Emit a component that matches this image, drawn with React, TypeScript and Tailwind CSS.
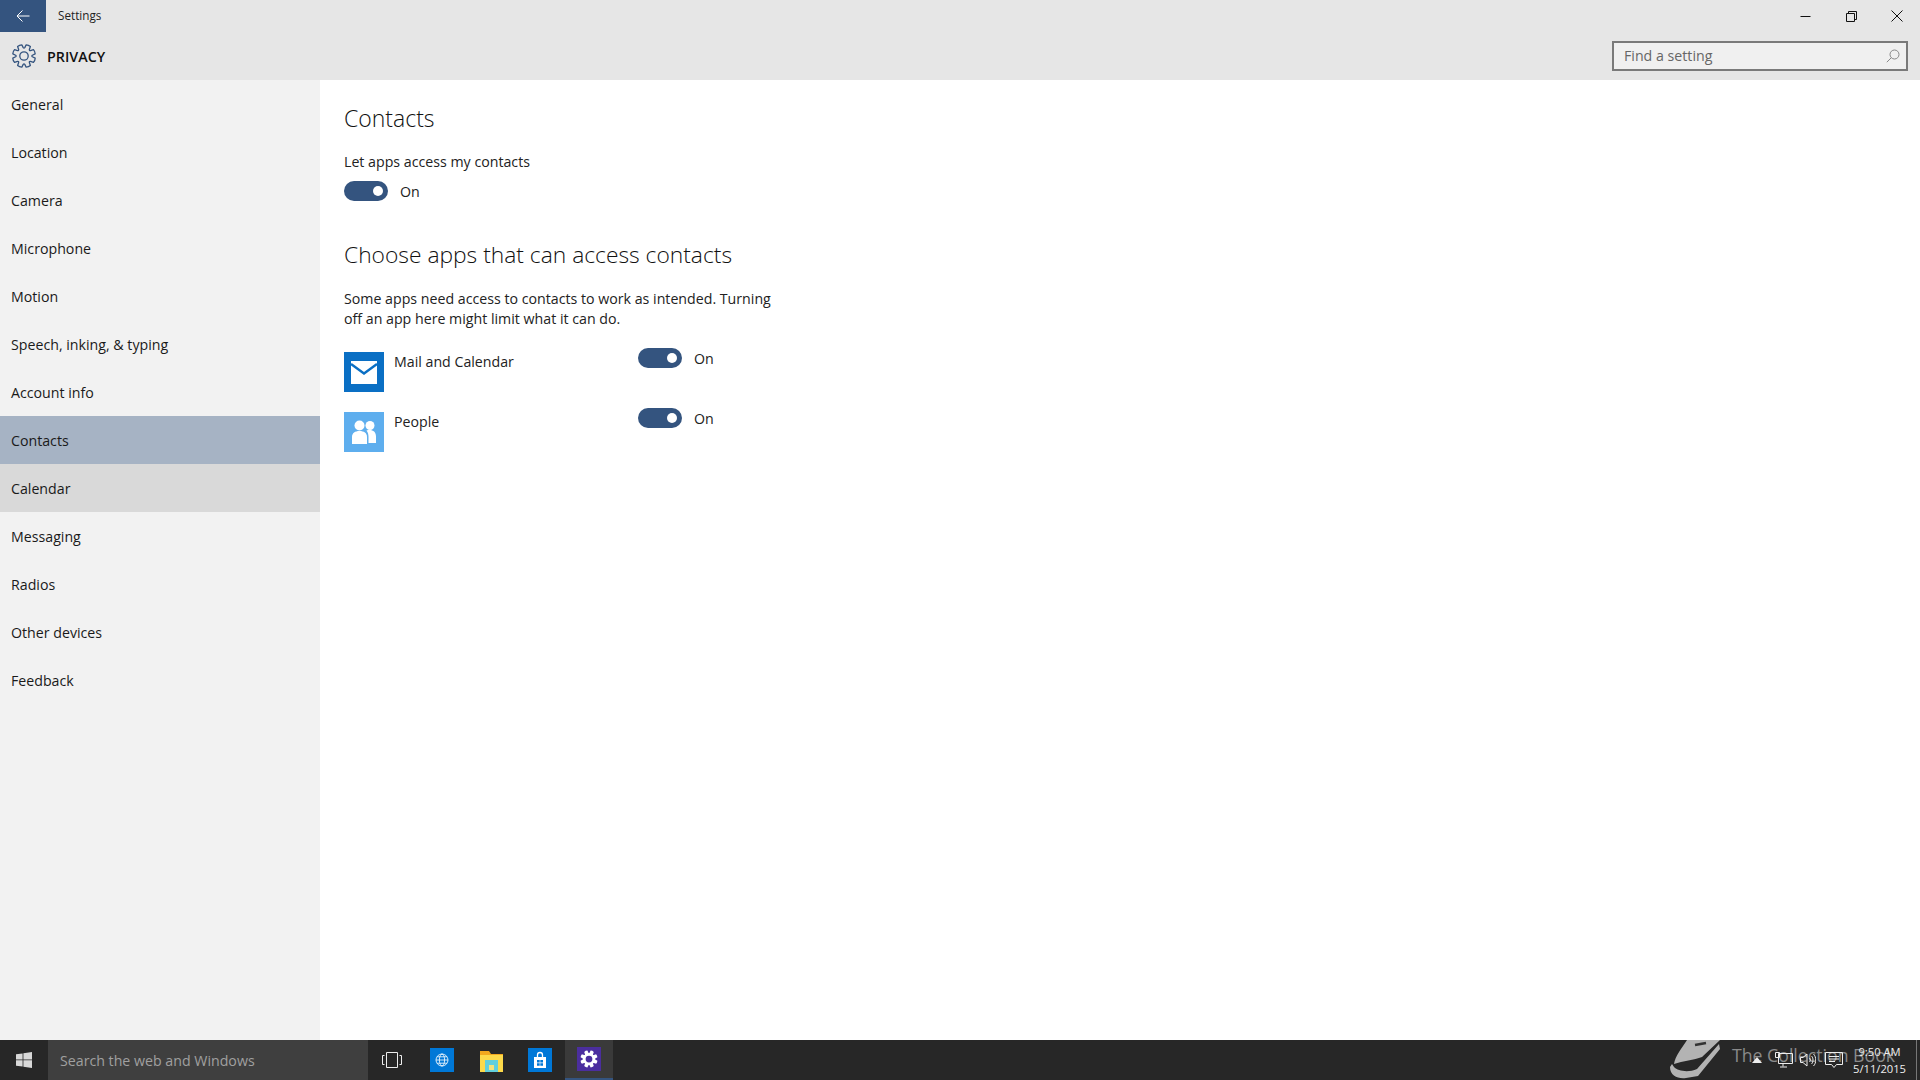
import React from "react";

const NAV = ["General","Location","Camera","Microphone","Motion","Speech, inking, & typing","Account info","Contacts","Calendar","Messaging","Radios","Other devices","Feedback"];

function gearPath(outer: number, inner: number) {
  const pts: string[] = [];
  const p = (r: number, a: number) => `${(12 + r * Math.cos(a)).toFixed(2)} ${(12 + r * Math.sin(a)).toFixed(2)}`;
  for (let i = 0; i < 8; i++) {
    const a = (i * Math.PI) / 4 + Math.PI / 8;
    pts.push(`${i === 0 ? "M" : "L"}${p(inner, a - 0.3)}`);
    pts.push(`L${p(outer, a - 0.2)}`);
    pts.push(`Q${p(outer + 0.6, a)} ${p(outer, a + 0.2)}`);
    pts.push(`L${p(inner, a + 0.3)}`);
    pts.push(`Q${p(inner - 1, a + Math.PI / 8)} ${p(inner, a + Math.PI / 4 - 0.3)}`);
  }
  return pts.join(" ") + "Z";
}

function Toggle() {
  return (
    <div className="flex items-center h-5">
      <div className="w-11 h-5 rounded-full bg-[#34547f] flex items-center justify-end pr-[5px]">
        <div className="w-[10px] h-[10px] rounded-full bg-white" />
      </div>
      <span className="ml-3 mt-px text-[14.2px] text-[#222]">On</span>
    </div>
  );
}

export default function App() {
  return (
    <div className="w-[1920px] h-[1080px] flex flex-col overflow-hidden bg-white text-[#1a1a1a]" style={{ fontFamily: '"Open Sans", "Noto Sans", sans-serif' }}>
      <header className="h-20 shrink-0 bg-[#e6e6e6] flex flex-col">
        <div className="h-8 flex items-center">
          <div className="w-[46px] h-8 bg-[#34547f] flex items-center justify-center">
            <svg width="14" height="14" viewBox="0 0 14 14" fill="none" stroke="white" strokeWidth="1">
              <path d="M1 7h12.5M6.5 1.5 1 7l5.5 5.5" />
            </svg>
          </div>
          <span className="ml-3 text-[11.7px] text-[#222]">Settings</span>
          <div className="ml-auto flex items-center h-8">
            <div className="w-[46px] flex justify-center">
              <svg width="11" height="11" viewBox="0 0 11 11" stroke="#111" fill="none"><path d="M.5 5.5h10" /></svg>
            </div>
            <div className="w-[46px] flex justify-center">
              <svg width="11" height="11" viewBox="0 0 11 11" stroke="#111" fill="none"><path d="M.5 2.5h8v8h-8z M2.5 2.5v-2h8v8h-2" /></svg>
            </div>
            <div className="w-[46px] flex justify-center">
              <svg width="12" height="12" viewBox="0 0 12 12" stroke="#111" fill="none"><path d="M.5.5l11 11M11.5.5l-11 11" /></svg>
            </div>
          </div>
        </div>
        <div className="flex-1 flex items-start">
          <div className="ml-3 mt-3 w-6 h-6">
            <svg width="24" height="24" viewBox="0 0 24 24" fill="none" stroke="#34547f" strokeWidth="1.3" strokeLinejoin="round">
              <path d={gearPath(11.4, 8.4)} />
              <circle cx="12" cy="12" r="4.2" />
            </svg>
          </div>
          <span className="ml-[11px] mt-[15px] text-[14.3px] leading-5 font-semibold text-[#111]">PRIVACY</span>
          <div className="ml-auto mr-3 mt-[9px] w-[296px] h-[30px] border-2 border-[#7a7a7a] bg-[#f0f0f0] flex items-center pl-[10px] pr-[6px]">
            <span className="text-[14.2px] text-[#666]">Find a setting</span>
            <svg className="ml-auto" width="14" height="14" viewBox="0 0 14 14" fill="none" stroke="#888"><circle cx="8.5" cy="5.5" r="4.5" /><path d="M5.3 8.7.8 13.2" /></svg>
          </div>
        </div>
      </header>

      <div className="flex-1 flex min-h-0">
        <nav className="w-80 shrink-0 bg-[#f2f2f2]">
          {NAV.map((n) => (
            <div key={n} className={`h-12 flex items-center pl-[11px] pt-[2px] text-[14.2px] text-[#1a1a1a] ${n === "Contacts" ? "bg-[#a6b3c4]" : n === "Calendar" ? "bg-[#d9d9d9]" : ""}`}>
              {n}
            </div>
          ))}
        </nav>
        <main className="flex-1 pl-6 pt-5">
          <h1 className="h-9 leading-9 text-[23px] font-light text-[#111]">Contacts</h1>
          <p className="mt-4 h-5 leading-5 text-[14.2px] text-[#222]">Let apps access my contacts</p>
          <div className="mt-[9px]"><Toggle /></div>
          <h2 className="mt-9 h-9 leading-9 text-[22.8px] font-light text-[#111]">Choose apps that can access contacts</h2>
          <p className="mt-4 w-[440px] leading-5 text-[14.2px] text-[#222]">Some apps need access to contacts to work as intended. Turning off an app here might limit what it can do.</p>
          <div className="mt-[23px] flex flex-col gap-5">
            <div className="flex items-start h-10">
              <div className="w-10 h-10 bg-[#0a6fc4] flex items-center justify-center">
                <svg width="26" height="23" viewBox="0 0 26 23"><path d="M0 0h26v23H0z" fill="white" /><path d="M0 3l13 9.5L26 3" fill="none" stroke="#0a6fc4" strokeWidth="2.4" /></svg>
              </div>
              <span className="ml-[10px] w-[244px] leading-5 text-[14.2px] text-[#222]">Mail and Calendar</span>
              <div className="-mt-1"><Toggle /></div>
            </div>
            <div className="flex items-start h-10">
              <div className="w-10 h-10 bg-[#5eaeee] flex items-center justify-center">
                <svg width="26" height="26" viewBox="0 0 26 26" fill="white"><circle cx="8.5" cy="6.5" r="5" /><circle cx="19" cy="6.5" r="4.5" /><path d="M1 25v-7c0-4 3-6 7.5-6s7.5 2 7.5 6v7z" /><path d="M15.5 11.5c5-1.5 9.5.5 9.5 6V24h-7.5v-6c0-2.500-.5-4.500-2-6.500z" /></svg>
              </div>
              <span className="ml-[10px] w-[244px] leading-5 text-[14.2px] text-[#222]">People</span>
              <div className="-mt-1"><Toggle /></div>
            </div>
          </div>
        </main>
      </div>

      <footer className="relative h-10 shrink-0 bg-[#272727] flex items-stretch text-[#ddd]">
        <div className="w-12 flex items-center justify-center">
          <svg width="16" height="16" viewBox="0 0 16 16" fill="#d8d8d8"><path d="M0 2.3 6.6 1.4v6.1H0zM7.4 1.3 16 0v7.5H7.4zM0 8.3h6.6v6.3L0 13.7zM7.4 8.3H16V16l-8.6-1.3z" /></svg>
        </div>
        <div className="w-[320px] bg-[#3f3f3f] flex items-center pl-3 pt-[2px] text-[14.2px] text-[#a0a0a0]">Search the web and Windows</div>
        <div className="w-12 flex items-center justify-center">
          <svg width="20" height="16" viewBox="0 0 20 16" fill="none" stroke="#eee"><path d="M4.500.5h11v15h-11zM2.500 3.500H.5v9h2M17.500 3.500h2v9h-2" /></svg>
        </div>
        <div className="ml-[14px] w-6 flex items-center">
          <div className="w-6 h-6 bg-[#0078d7] flex items-center justify-center">
            <svg width="14" height="14" viewBox="0 0 14 14" fill="none" stroke="white" strokeWidth="0.8"><circle cx="7" cy="7" r="6" /><ellipse cx="7" cy="7" rx="2.600" ry="6" /><path d="M1 7h12M2 3.800h10M2 10.200h10" /></svg>
          </div>
        </div>
        <div className="ml-[26px] w-[23px] flex items-center">
          <svg width="23" height="24" viewBox="0 0 23 24"><path d="M0 3h9l2 3h12v18H0z" fill="#f2a81e" /><path d="M0 7h23v17H0z" fill="#fcd94a" /><path d="M5 12h13v12H5z" fill="#62cfdc" /><path d="M9 17h5v5H9z" fill="#f6e27a" /></svg>
        </div>
        <div className="ml-[25px] w-6 flex items-center">
          <div className="w-6 h-6 bg-[#0078d7] flex items-center justify-center">
            <svg width="14" height="18" viewBox="0 0 14 18"><path d="M1 6h12v11H1z" fill="white" /><path d="M4.500 6V4a2.500 2.500 0 0 1 5 0v2" fill="none" stroke="white" strokeWidth="1.300" /><path d="M4 9h2.700v2.600H4zM7.300 9H10v2.600H7.300zM4 12.200h2.700v2.600H4zM7.300 12.200H10v2.600H7.300z" fill="#0078d7" /></svg>
          </div>
        </div>
        <div className="w-12 ml-[13px] bg-[#3a3a3a] border-b-2 border-[#34547f] flex items-center justify-center">
          <div className="w-6 h-6 bg-[#4b2e9e] flex items-center justify-center">
            <svg width="18" height="18" viewBox="0 0 24 24" fill="white" fillRule="evenodd">
              <path d={gearPath(11.4, 8.4) + " M12 7.500a4.500 4.500 0 1 0 0 9a4.500 4.500 0 1 0 0-9Z"} />
            </svg>
          </div>
        </div>

        <div className="absolute left-[1670px] top-0 h-10 w-[52px]">
          <svg width="52" height="40" viewBox="0 0 52 40" fill="#b3b3b3">
            <path d="M17 0H50L32 17C24 20 13 21 4 24C5 16 12 8 17 0Z" />
            <path d="M0 27C0 36 8 39 16 38L28 36L50 9L49 4L27 29C18 33 8 31 4 27L2 24Z" />
            <path d="M25 5L36 3" stroke="#333" strokeWidth="2.500" fill="none" />
          </svg>
        </div>
        <span className="absolute left-[1732px] top-[5px] leading-5 text-[17.7px] text-[#8a8a8a]">The Collection Book</span>

        <div className="absolute left-[1752px] top-0 h-10 flex items-center">
          <svg width="10" height="6" viewBox="0 0 10 6" fill="#eee"><path d="M5 0l5 6H0z" /></svg>
          <svg className="ml-[13px]" width="18" height="16" viewBox="0 0 18 16" fill="none" stroke="#eee"><path d="M3.500 1.500h14v10h-14zM8 11.500v3M5 15h7M.5 .5h4v5h-4z" /></svg>
          <svg className="ml-[7px]" width="16" height="14" viewBox="0 0 16 14" fill="none" stroke="#eee"><path d="M.5 4.500h2.500L7 1v12L3 9.500H.5zM9.500 5c1 1 1 3 0 4M11.500 3c2 2 2 6 0 8M13.500 1c3 3 3 9 0 12" /></svg>
          <svg className="ml-[9px]" width="18" height="16" viewBox="0 0 18 16" fill="none" stroke="#eee"><path d="M.5.5h17v12h-6l-2.500 3-2.500-3h-6zM4 4.500h10M4 7h10M4 9.500h6" /></svg>
        </div>
        <div className="absolute right-[14px] top-[3px] flex flex-col items-center text-[11.2px] leading-[17px] text-[#eee]">
          <span>9:50 AM</span>
          <span>5/11/2015</span>
        </div>
        <div className="absolute right-[3px] top-0 h-10 w-px bg-[#777]" />
      </footer>
    </div>
  );
}
